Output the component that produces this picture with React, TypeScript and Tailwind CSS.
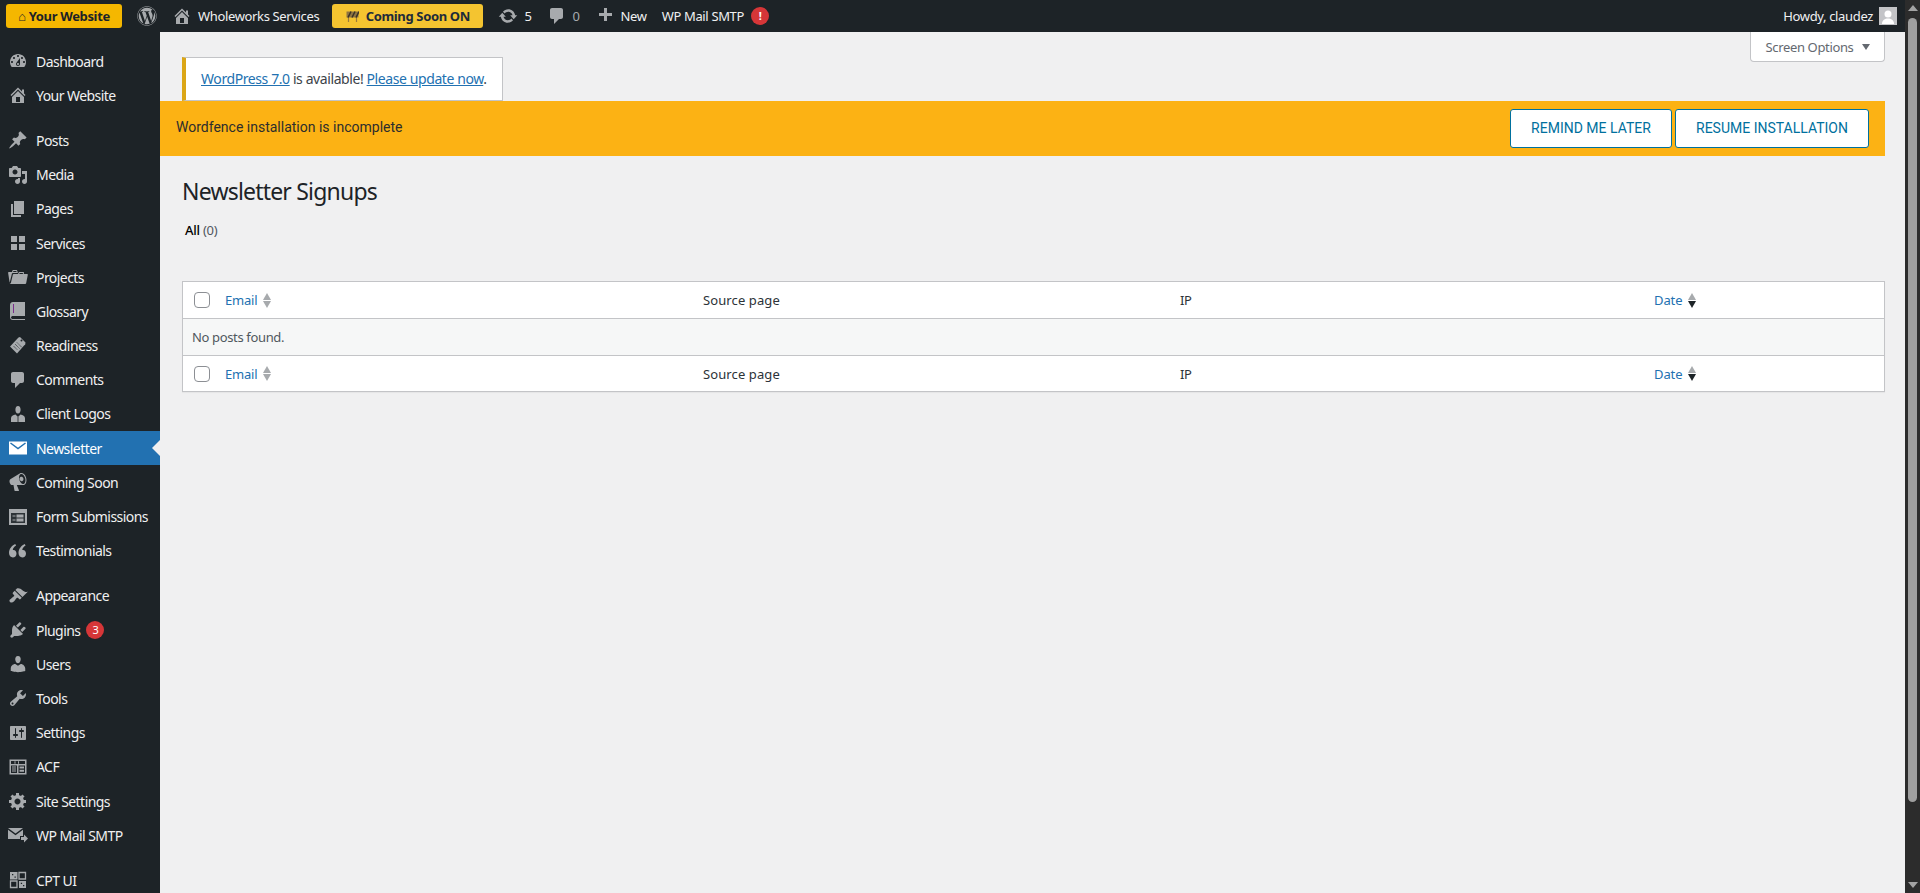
import type { ReactNode } from 'react'
import { FaWordpress } from 'react-icons/fa'

const paths = {
  dashboard:
    'M3.76 16h12.48c1.1-1.37 1.76-3.11 1.76-5 0-4.42-3.58-8-8-8s-8 3.58-8 8c0 1.89.66 3.63 1.76 5zM10 4c.55 0 1 .45 1 1s-.45 1-1 1-1-.45-1-1 .45-1 1-1zM6 6c.55 0 1 .45 1 1s-.45 1-1 1-1-.45-1-1 .45-1 1-1zm8 0c.55 0 1 .45 1 1s-.45 1-1 1-1-.45-1-1 .45-1 1-1zm-5.37 5.55L12 7v6c0 1.1-.9 2-2 2s-2-.9-2-2c0-.57.24-1.08.63-1.45zM4 10c.55 0 1 .45 1 1s-.45 1-1 1-1-.45-1-1 .45-1 1-1zm12 0c.55 0 1 .45 1 1s-.45 1-1 1-1-.45-1-1 .45-1 1-1zm-5 3c0-.55-.45-1-1-1s-1 .45-1 1 .45 1 1 1 1-.45 1-1z',
  home: 'M16 8.5l1.53 1.53-1.06 1.06L10 4.62l-6.47 6.47-1.06-1.06L10 2.5l4 4v-2h2v4zm-6-2.46l6 5.99V18H4v-5.97zM12 17v-5H8v5h4z',
  post: 'M10.44 3.02l1.82-1.82 6.36 6.35-1.83 1.82c-1.05-.68-2.48-.57-3.41.36l-.75.75c-.92.93-1.04 2.35-.35 3.41l-1.83 1.82-2.41-2.41-2.8 2.79c-.42.42-3.38 2.71-3.8 2.29s1.86-3.39 2.28-3.81l2.79-2.79L4.1 9.36l1.83-1.82c1.05.69 2.48.57 3.4-.36l.75-.75c.93-.92 1.05-2.35.36-3.41z',
  media:
    'M13 11V4c0-.55-.45-1-1-1h-1.67L9 1H5L3.67 3H2c-.55 0-1 .45-1 1v7c0 .55.45 1 1 1h10c.55 0 1-.45 1-1zM7 4.5c1.38 0 2.5 1.12 2.5 2.5S8.38 9.5 7 9.5 4.5 8.38 4.5 7 5.62 4.5 7 4.5zM14 6h5v10.5c0 1.38-1.12 2.5-2.5 2.5S14 17.88 14 16.5s1.12-2.5 2.5-2.5c.17 0 .34.02.5.05V9h-3V6zm-4 8.05V13h2v3.5c0 1.38-1.12 2.5-2.5 2.5S7 17.88 7 16.5 8.12 14 9.5 14c.17 0 .34.02.5.05z',
  page: 'M6 15V2h10v13H6zm-1 1h8v2H3V5h2v11z',
  grid: 'M3 3h6v6H3zM11 3h6v6h-6zM3 11h6v6H3zM11 11h6v6h-6z',
  folder:
    'M4 5H.78c-.37 0-.74.32-.69.84l1.56 9.99S3.5 8.47 3.86 6.7c.11-.53.61-.7.98-.7H10s-.7-2.08-.77-2.31C9.11 3.25 8.89 3 8.45 3H5.14c-.36 0-.7.23-.8.64C4.25 4.04 4 5 4 5zm4.88 0h-4s.42-1 .87-1h2.13c.48 0 1 1 1 1zM2.67 16.25c-.31.47-.76.75-1.26.75h15.73c.54 0 .92-.31 1.03-.83.44-2.19 1.68-8.44 1.68-8.44.07-.5-.3-.73-.62-.73H16V5.53c0-.16-.26-.53-.66-.53h-3.76c-.52 0-.87.58-.87.58L10 7H5.59c-.32 0-.63.19-.69.5 0 0-1.59 6.7-1.72 7.33-.07.37-.22.99-.51 1.42zM15.38 7H11s.58-1 1.13-1h2.29c.71 0 .96 1 .96 1z',
  comment: 'M5 2h9c1.1 0 2 .9 2 2v7c0 1.1-.9 2-2 2h-2l-5 5v-5H5c-1.1 0-2-.9-2-2V4c0-1.1.9-2 2-2z',
  user: 'M10 9.25c-2.27 0-2.73-3.44-2.73-3.44C7 4.02 7.82 2 9.97 2c2.16 0 2.98 2.02 2.71 3.81 0 0-.41 3.44-2.68 3.44zm0 2.57L12.72 10c2.39 0 4.52 2.33 4.52 4.53v2.49s-3.65 1.13-7.24 1.13c-3.65 0-7.24-1.13-7.24-1.13v-2.49c0-2.25 1.94-4.48 4.47-4.48z',
  megaphone:
    'M18.15 5.94c.46 1.62.38 3.22-.02 4.48-.42 1.28-1.26 2.18-2.3 2.48-.16.06-.26.06-.4.06-.06.02-.12.02-.18.02-.06.02-.14.02-.22.02H8.8l2.22 5.5c.02.14-.06.26-.14.34-.08.1-.24.16-.34.16H6.95c-.1 0-.26-.06-.34-.16-.08-.08-.16-.2-.14-.34l-1-5.5H4.25c-.5.06-1.08-.18-1.54-.62s-.88-1.08-1.06-1.88c-.24-.8-.2-1.56-.02-2.2.18-.62.58-1.08 1.06-1.3l9-5.42c.1-.06.18-.1.24-.16.06-.04.14-.08.24-.12.16-.08.28-.12.5-.18 1.04-.3 2.24.1 3.22.98s1.8 2.18 2.26 3.78zm-2.58 5.98c.4-.1.74-.34 1.04-.7.58-.7.86-1.76.86-3.04 0-.64-.1-1.3-.28-1.98-.34-1.36-1.02-2.5-1.78-3.24s-1.68-1.1-2.46-.88c-.82.22-1.4.96-1.7 2-.32 1.04-.28 2.36.06 3.72.38 1.36 1 2.5 1.8 3.24.78.74 1.62 1.1 2.46.88zm-2.54-7.08c.16-.04.32-.04.5-.04.72 0 1.42.58 1.74 1.36.06.16.1.32.14.46.14.6.06 1.18-.16 1.66-.22.46-.6.8-1.08.94-.46.14-.94.06-1.36-.2-.44-.26-.8-.66-1.02-1.2-.08-.14-.12-.28-.16-.44-.14-.58-.08-1.18.16-1.64.22-.46.6-.82 1.08-.96.06 0 .1-.02.16-.04z',
  quote:
    'M8.5 12.5c0 2.4-1.6 4-3.7 4S1 14.7 1 12.1C1 8 3.6 4.7 7.2 3l.9 1.6C5.9 6 4.9 7.6 4.8 9c2.2-.4 3.7 1.3 3.7 3.5zm9.5 0c0 2.4-1.6 4-3.7 4s-3.8-1.8-3.8-4.4c0-4.1 2.6-7.4 6.2-9.1l.9 1.6c-2.2 1.4-3.2 3-3.3 4.4 2.2-.4 3.7 1.3 3.7 3.5z',
  brush:
    'M14.48 11.06L7.41 3.99l1.5-1.5c.5-.56 2.3-.47 3.51.32 1.21.8 1.43 1.28 2.91 2.1 1.18.64 2.45 1.26 4.45.85zm-.71.71L6.7 4.7 4.93 6.47c-.39.39-.39 1.02 0 1.41l1.06 1.06c.39.39.39 1.03 0 1.42-.6.6-1.43 1.15-2.21 1.73-.35.26-.7.53-1.01.84C1.43 13.26.97 14.93 2.04 16s2.74.61 4.07-.72c.31-.31.58-.66.84-1.01.58-.78 1.13-1.61 1.73-2.21.39-.39 1.03-.39 1.42 0l1.06 1.06c.39.39 1.02.39 1.41 0z',
  plug: 'M13.11 4.36L9.87 7.6 8 5.73l3.24-3.24c.35-.34 1.05-.2 1.56.32.52.51.66 1.21.31 1.55zm-8 1.77l.91-1.12 9.01 9.01-1.19.84c-.71.71-2.63 1.16-3.82 1.16H6.14L4.9 17.26c-.59.59-1.54.59-2.12 0-.59-.58-.59-1.53 0-2.12l1.24-1.24v-3.88c0-1.13.4-3.19 1.09-3.89zm7.26 3.97l3.24-3.24c.34-.35 1.04-.21 1.55.31.52.51.66 1.21.31 1.55l-3.24 3.25z',
  wrench:
    'M16.68 9.77c-1.34 1.34-3.3 1.67-4.95.99l-5.41 6.52c-.99.99-2.59.99-3.58 0s-.99-2.59 0-3.57l6.52-5.42c-.68-1.65-.35-3.61.99-4.95 1.28-1.28 3.12-1.62 4.72-1.06l-2.89 2.89 2.82 2.82 2.86-2.87c.53 1.58.18 3.39-1.08 4.65zM3.81 16.21c.4.39 1.04.39 1.43 0 .4-.4.4-1.04 0-1.43-.39-.4-1.03-.4-1.43 0-.39.39-.39 1.03 0 1.43z',
  sliders:
    'M18 16V4c0-.55-.45-1-1-1H3c-.55 0-1 .45-1 1v12c0 .55.45 1 1 1h14c.55 0 1-.45 1-1zM8 11h1c.55 0 1 .45 1 1s-.45 1-1 1H8v1.5c0 .28-.22.5-.5.5s-.5-.22-.5-.5V13H6c-.55 0-1-.45-1-1s.45-1 1-1h1V5.5c0-.28.22-.5.5-.5s.5.22.5.5V11zm5-2h-1c-.55 0-1-.45-1-1s.45-1 1-1h1V5.5c0-.28.22-.5.5-.5s.5.22.5.5V7h1c.55 0 1 .45 1 1s-.45 1-1 1h-1v5.5c0 .28-.22.5-.5.5s-.5-.22-.5-.5V9z',
  gear: 'M18 12h-2.18c-.17.7-.44 1.35-.81 1.93l1.54 1.54-2.1 2.1-1.54-1.54c-.58.36-1.23.63-1.91.79V19H8v-2.18c-.68-.16-1.33-.43-1.91-.79l-1.54 1.54-2.12-2.12 1.54-1.54c-.36-.58-.63-1.23-.79-1.91H1V9.03h2.17c.16-.7.44-1.35.8-1.94L2.43 5.55l2.1-2.1 1.54 1.54c.58-.37 1.24-.64 1.93-.81V2h3v2.18c.68.16 1.33.43 1.91.79l1.54-1.54 2.12 2.12-1.54 1.54c.36.59.64 1.24.8 1.94H18V12zm-8.5 1.5c1.66 0 3-1.34 3-3s-1.34-3-3-3-3 1.34-3 3 1.34 3 3 3z',
  update:
    'M10.2 3.28c3.53 0 6.43 2.61 6.92 6h2.08l-3.5 4-3.5-4h2.32c-.45-1.97-2.21-3.45-4.32-3.45-1.45 0-2.73.71-3.54 1.78L4.95 5.66C6.23 4.2 8.11 3.28 10.2 3.28zm-.4 13.44c-3.52 0-6.43-2.61-6.92-6H.8l3.5-4c1.17 1.33 2.33 2.67 3.5 4H5.48c.45 1.97 2.21 3.45 4.32 3.45 1.45 0 2.73-.71 3.54-1.78l1.71 1.95c-1.28 1.46-3.15 2.38-5.25 2.38z',
  plus: 'M17 7v3h-5v5H9v-5H4V7h5V2h3v5h5z',
}

function Dash({ d, className = 'text-[#a7aaad]' }: { d: string; className?: string }) {
  return (
    <svg viewBox="0 0 20 20" className={`h-5 w-5 shrink-0 fill-current ${className}`} aria-hidden>
      <path d={d} fillRule="evenodd" />
    </svg>
  )
}

function Glossary() {
  return (
    <svg viewBox="0 0 20 20" className="h-5 w-5 text-[#a7aaad]" aria-hidden>
      <path fill="currentColor" d="M5 1h12v14H5c-1.2 0-2 .6-2 1.5S3.8 18 5 18h12v1H5c-2 0-3-1.2-3-3V4c0-1.7 1.3-3 3-3z" />
      <path stroke="#7b2d8e" strokeWidth="1" d="M5.5 3v9" />
    </svg>
  )
}

function Readiness() {
  return (
    <svg viewBox="0 0 20 20" className="h-5 w-5 text-[#a7aaad]" aria-hidden>
      <path fill="currentColor" d="M10.5 1.5l1.5-.5 5.5 5.5-.3 1.8L9 17.500 2 10.500z" />
      <path stroke="#1d2327" strokeWidth=".8" strokeDasharray="1 .7" d="M7 8l5 5M9 6.500l5 5M5.500 10l4 4" />
      <circle cx="13.500" cy="4.500" r="1" fill="#1d2327" />
    </svg>
  )
}

function ClientLogos() {
  return (
    <svg viewBox="0 0 20 20" className="h-5 w-5 text-[#a7aaad]" aria-hidden>
      <path fill="currentColor" d="M10 9.5c-1.9 0-2.6-2.5-2.6-3.8C7.4 3.6 8.3 2 10 2s2.6 1.6 2.6 3.7c0 1.3-.7 3.8-2.6 3.8zM7.500 10.500L10 13l2.500-2.500c2.400.3 4.500 1.500 4.500 3.800V18H3v-3.700c0-2.300 2.100-3.500 4.500-3.800z" />
      <path stroke="#1d2327" strokeWidth=".8" d="M10 13v5" />
    </svg>
  )
}

function Envelope() {
  return (
    <svg viewBox="0 0 20 20" className="h-5 w-5" aria-hidden>
      <rect x="1" y="3.5" width="18" height="13" fill="#fff" />
      <path d="M2.5 5L10 10.5 17.500 5" fill="none" stroke="#2271b1" strokeWidth="1.5" />
    </svg>
  )
}

function FormIcon() {
  return (
    <svg viewBox="0 0 20 20" className="h-5 w-5 text-[#a7aaad]" aria-hidden>
      <path fill="currentColor" fillRule="evenodd" d="M1 2h18v16H1zM3 6v10h14V6z" />
      <path fill="currentColor" d="M3 6h14v10H3z" opacity=".12" />
      <path fill="currentColor" d="M8.5 7.500h7v3h-7zM8.500 11.500h7v3h-7zM4.500 8.500h3v1h-3zM4.500 12.500h3v1h-3z" />
    </svg>
  )
}

function AcfIcon() {
  return (
    <svg viewBox="0 0 20 20" className="h-5 w-5 text-[#a7aaad]" aria-hidden>
      <path fill="currentColor" fillRule="evenodd" d="M1.500 2.500h17v15h-17zM3 4v3h14V4zM3 8.500V16h6V8.500zM10.500 8.500V16H17V8.500z" />
      <path fill="currentColor" d="M4 9.500h4v1H4zM4 11.500h4v1H4zM4 13.500h4v1H4zM11.500 9.500h4.500v2h-4.500zM11.500 12.700h4.500v2h-4.500zM6.500 4.300h1v2.400h-1zM10 4.300h1v2.400h-1z" />
    </svg>
  )
}

function MailSmtp() {
  return (
    <svg viewBox="0 0 20 20" className="h-5 w-5 text-[#a7aaad]" aria-hidden>
      <path fill="currentColor" d="M0 3h15l-7.500 5.500zM0 4.800l7.500 5.500L15 4.800V11h-3v3H0z" />
      <path fill="currentColor" d="M13 12h3V9.500l4 4-4 4V15h-3z" />
    </svg>
  )
}

function CptIcon() {
  return (
    <svg viewBox="0 0 20 20" className="h-5 w-5 text-[#a7aaad]" aria-hidden>
      <path fill="none" stroke="currentColor" strokeWidth="1.3" d="M11 2.500h6.500V9H11zM2.500 11H9v6.500H2.500z" />
      <path fill="currentColor" fillRule="evenodd" d="M2 2h7.500v7.500H2zM4 4v1.300h1.300V4zM6.500 6.500v1.300h1.300V6.500zM11 11h7v7h-7zM12.800 12.800v1.300h1.300v-1.300zM15 15v1.300h1.300V15z" />
    </svg>
  )
}

type MenuItem = { label: string; icon: ReactNode; active?: boolean; badge?: string; gapBefore?: boolean }

const menu: MenuItem[] = [
  { label: 'Dashboard', icon: <Dash d={paths.dashboard} /> },
  { label: 'Your Website', icon: <Dash d={paths.home} /> },
  { label: 'Posts', icon: <Dash d={paths.post} />, gapBefore: true },
  { label: 'Media', icon: <Dash d={paths.media} /> },
  { label: 'Pages', icon: <Dash d={paths.page} /> },
  { label: 'Services', icon: <Dash d={paths.grid} /> },
  { label: 'Projects', icon: <Dash d={paths.folder} /> },
  { label: 'Glossary', icon: <Glossary /> },
  { label: 'Readiness', icon: <Readiness /> },
  { label: 'Comments', icon: <Dash d={paths.comment} /> },
  { label: 'Client Logos', icon: <ClientLogos /> },
  { label: 'Newsletter', icon: <Envelope />, active: true },
  { label: 'Coming Soon', icon: <Dash d={paths.megaphone} /> },
  { label: 'Form Submissions', icon: <FormIcon /> },
  { label: 'Testimonials', icon: <Dash d={paths.quote} /> },
  { label: 'Appearance', icon: <Dash d={paths.brush} />, gapBefore: true },
  { label: 'Plugins', icon: <Dash d={paths.plug} />, badge: '3' },
  { label: 'Users', icon: <Dash d={paths.user} /> },
  { label: 'Tools', icon: <Dash d={paths.wrench} /> },
  { label: 'Settings', icon: <Dash d={paths.sliders} /> },
  { label: 'ACF', icon: <AcfIcon /> },
  { label: 'Site Settings', icon: <Dash d={paths.gear} /> },
  { label: 'WP Mail SMTP', icon: <MailSmtp /> },
  { label: 'CPT UI', icon: <CptIcon />, gapBefore: true },
]

function Sidebar() {
  return (
    <nav className="h-full w-[160px] shrink-0 overflow-hidden bg-[#1d2327] pt-[12px] text-[14px] tracking-[-0.55px]">
      {menu.map(item => (
        <a
          key={item.label}
          className={`relative flex h-[34.2px] items-center pl-[8px] text-[#f0f0f1] ${item.gapBefore ? 'mt-[11px]' : ''} ${item.active ? 'bg-[#2271b1] text-white' : ''}`}
        >
          <span className="flex w-[28px] shrink-0">{item.icon}</span>
          <span className="whitespace-nowrap pt-px">{item.label}</span>
          {item.badge && (
            <span className="ml-[6px] flex h-[18px] w-[18px] items-center justify-center rounded-full bg-[#d63638] text-[11px] text-white">
              {item.badge}
            </span>
          )}
          {item.active && (
            <span className="absolute right-0 top-1/2 h-0 w-0 -translate-y-1/2 border-y-[8px] border-r-[8px] border-y-transparent border-r-[#f0f0f1]" />
          )}
        </a>
      ))}
    </nav>
  )
}

function AdminBar() {
  return (
    <header className="flex h-[32px] shrink-0 items-center bg-[#1d2327] pl-[6px] pr-[8px] text-[#f0f0f1]">
      <span className="flex h-[24px] w-[116px] items-center justify-center rounded-[3px] bg-[#f5b700] font-bold text-[#1d2327]">
        ⌂ Your Website
      </span>
      <FaWordpress className="ml-[15px] h-[20px] w-[20px] text-[#a7aaad]" />
      <span className="ml-[15px]"><Dash d={paths.home} /></span>
      <span className="ml-[6px]">Wholeworks Services</span>
      <span className="ml-[13px] flex h-[24px] w-[151px] items-center justify-center gap-[7px] rounded-[3px] bg-[#f4c430] font-bold text-[#1d2b3a]">
        <svg viewBox="0 0 13 11" className="h-[11px] w-[13px]" aria-hidden>
          <path d="M2.500 6v5M10.500 6v5" stroke="#9a7b3c" strokeWidth="1.200" />
          <path d="M0.500 0.500h12v6h-12z" fill="#8f7440" />
          <path d="M2 6.500l3-6M6 6.500l3-6M10 6.500l3-6" stroke="#3a3226" strokeWidth="1.500" />
        </svg>
        Coming Soon ON
      </span>
      <span className="ml-[15px]"><Dash d={paths.update} /></span>
      <span className="ml-[6px]">5</span>
      <span className="ml-[16px]"><Dash d={paths.comment} /></span>
      <span className="ml-[5px] text-[#a7aaad]">0</span>
      <span className="ml-[15px]"><Dash d={paths.plus} /></span>
      <span className="ml-[6px]">New</span>
      <span className="ml-[15px]">WP Mail SMTP</span>
      <span className="ml-[7px] flex h-[18px] w-[18px] items-center justify-center rounded-full bg-[#d63638] text-[11px] font-bold text-white">!</span>
      <span className="ml-auto">Howdy, claudez</span>
      <span className="ml-[6px] flex h-[18px] w-[18px] items-end justify-center overflow-hidden border border-[#c3c4c7] bg-[#c3c4c7]">
        <svg viewBox="0 0 16 16" className="h-[16px] w-[16px] fill-white" aria-hidden>
          <circle cx="8" cy="6" r="3.5" />
          <path d="M2 16c0-4 3-5.500 6-5.500s6 1.500 6 5.500z" />
        </svg>
      </span>
    </header>
  )
}

function SortArrows({ active }: { active?: boolean }) {
  return (
    <span className="ml-[6px] flex flex-col gap-[1px]">
      <span className="h-0 w-0 border-x-[4.5px] border-b-[7px] border-x-transparent border-b-[#a7aaad]" />
      <span className={`h-0 w-0 border-x-[4.5px] border-t-[7px] border-x-transparent ${active ? 'border-t-[#1d2327]' : 'border-t-[#a7aaad]'}`} />
    </span>
  )
}

function HeadRow({ height, line }: { height: string; line: string }) {
  return (
    <div className={`grid grid-cols-[32px_478px_477px_474px_1fr] items-center bg-white ${height} ${line}`}>
      <span className="flex pl-[11px]">
        <span className="h-[16px] w-[16px] rounded-[4px] border border-[#8c8f94] bg-white" />
      </span>
      <span className="flex items-center pl-[10px] tracking-[-0.2px] text-[#2271b1]">
        Email
        <SortArrows />
      </span>
      <span className="pl-[10px] tracking-[0.1px] text-[#2c3338]">Source page</span>
      <span className="pl-[10px] text-[#2c3338]">IP</span>
      <span className="flex items-center pl-[10px] tracking-[-0.1px] text-[#2271b1]">
        Date
        <SortArrows active />
      </span>
    </div>
  )
}

function Scrollbar() {
  return (
    <aside className="flex h-full w-[15px] shrink-0 flex-col items-center bg-[#2c2c2c]">
      <span className="mt-[5px] h-0 w-0 border-x-[5px] border-b-[6px] border-x-transparent border-b-[#a3a3a3]" />
      <span className="mt-[7px] h-[784px] w-[9px] rounded-full bg-[#9f9f9f]" />
      <span className="mt-[80px] h-0 w-0 border-x-[5px] border-t-[6px] border-x-transparent border-t-[#a3a3a3]" />
    </aside>
  )
}

export default function App() {
  return (
    <div
      className="flex h-[893px] w-[1920px] overflow-hidden bg-[#f0f0f1] text-[13px] leading-[18px] tracking-[-0.35px] text-[#3c434a]"
      style={{ fontFamily: '"Noto Sans", sans-serif' }}
    >
      <div className="flex h-full min-w-0 flex-1 flex-col">
        <AdminBar />
        <div className="flex min-h-0 flex-1">
          <Sidebar />
          <main className="min-w-0 flex-1">
            <div className="flex h-[25px] justify-end pr-[20px]">
              <button
                type="button"
                className="flex h-[30px] w-[135px] shrink-0 items-center justify-center gap-[8px] rounded-b-[4px] border border-t-0 border-[#c3c4c7] bg-white text-[#646970]"
              >
                Screen Options
                <span className="h-0 w-0 border-x-[4px] border-t-[6px] border-x-transparent border-t-[#646970]" />
              </button>
            </div>
            <div className="ml-[22px] flex h-[44px] w-[321px] items-center border border-l-4 border-[#c3c4c7] border-l-[#dba617] bg-white pl-[15px] text-[14px] tracking-[-0.41px]">
              <span className="whitespace-nowrap">
                <a className="text-[#2271b1] underline">WordPress 7.0</a> is available!{' '}
                <a className="text-[#2271b1] underline">Please update now</a>.
              </span>
            </div>
            <div
              className="flex h-[55px] w-[1725px] items-center justify-between bg-[#fcb214] pl-[16px] pr-[16px] text-[14px] tracking-normal text-[#2d2d2d]"
              style={{ fontFamily: 'Roboto, sans-serif' }}
            >
              <span className="-mt-[3px]">Wordfence installation is incomplete</span>
              <div className="flex gap-[3px]">
                <button type="button" className="h-[39px] w-[162px] rounded-[3px] border border-[#00709e] bg-white pb-[2px] uppercase text-[#00709e]">
                  Remind me later
                </button>
                <button type="button" className="h-[39px] w-[194px] rounded-[3px] border border-[#00709e] bg-white pb-[2px] uppercase text-[#00709e]">
                  Resume installation
                </button>
              </div>
            </div>
            <div className="pl-[22px] pr-[20px]">
              <h1 className="mt-[20px] text-[23px] leading-[30px] tracking-[-0.8px] text-[#1d2327]">Newsletter Signups</h1>
              <p className="mt-[15px] pl-[3px] leading-[18px] tracking-[-0.25px]">
                <span className="font-medium text-black">All</span> <span className="text-[#50575e]">(0)</span>
              </p>
              <div className="mt-[42px] border border-[#c3c4c7] shadow-[0_1px_1px_rgba(0,0,0,0.04)]">
                <HeadRow height="h-[37px]" line="border-b border-[#c3c4c7]" />
                <div className="flex h-[37px] items-center border-b border-[#c3c4c7] bg-[#f6f7f7] pl-[9px] text-[#50575e]">
                  No posts found.
                </div>
                <HeadRow height="h-[35px]" line="" />
              </div>
            </div>
          </main>
        </div>
      </div>
      <Scrollbar />
    </div>
  )
}
